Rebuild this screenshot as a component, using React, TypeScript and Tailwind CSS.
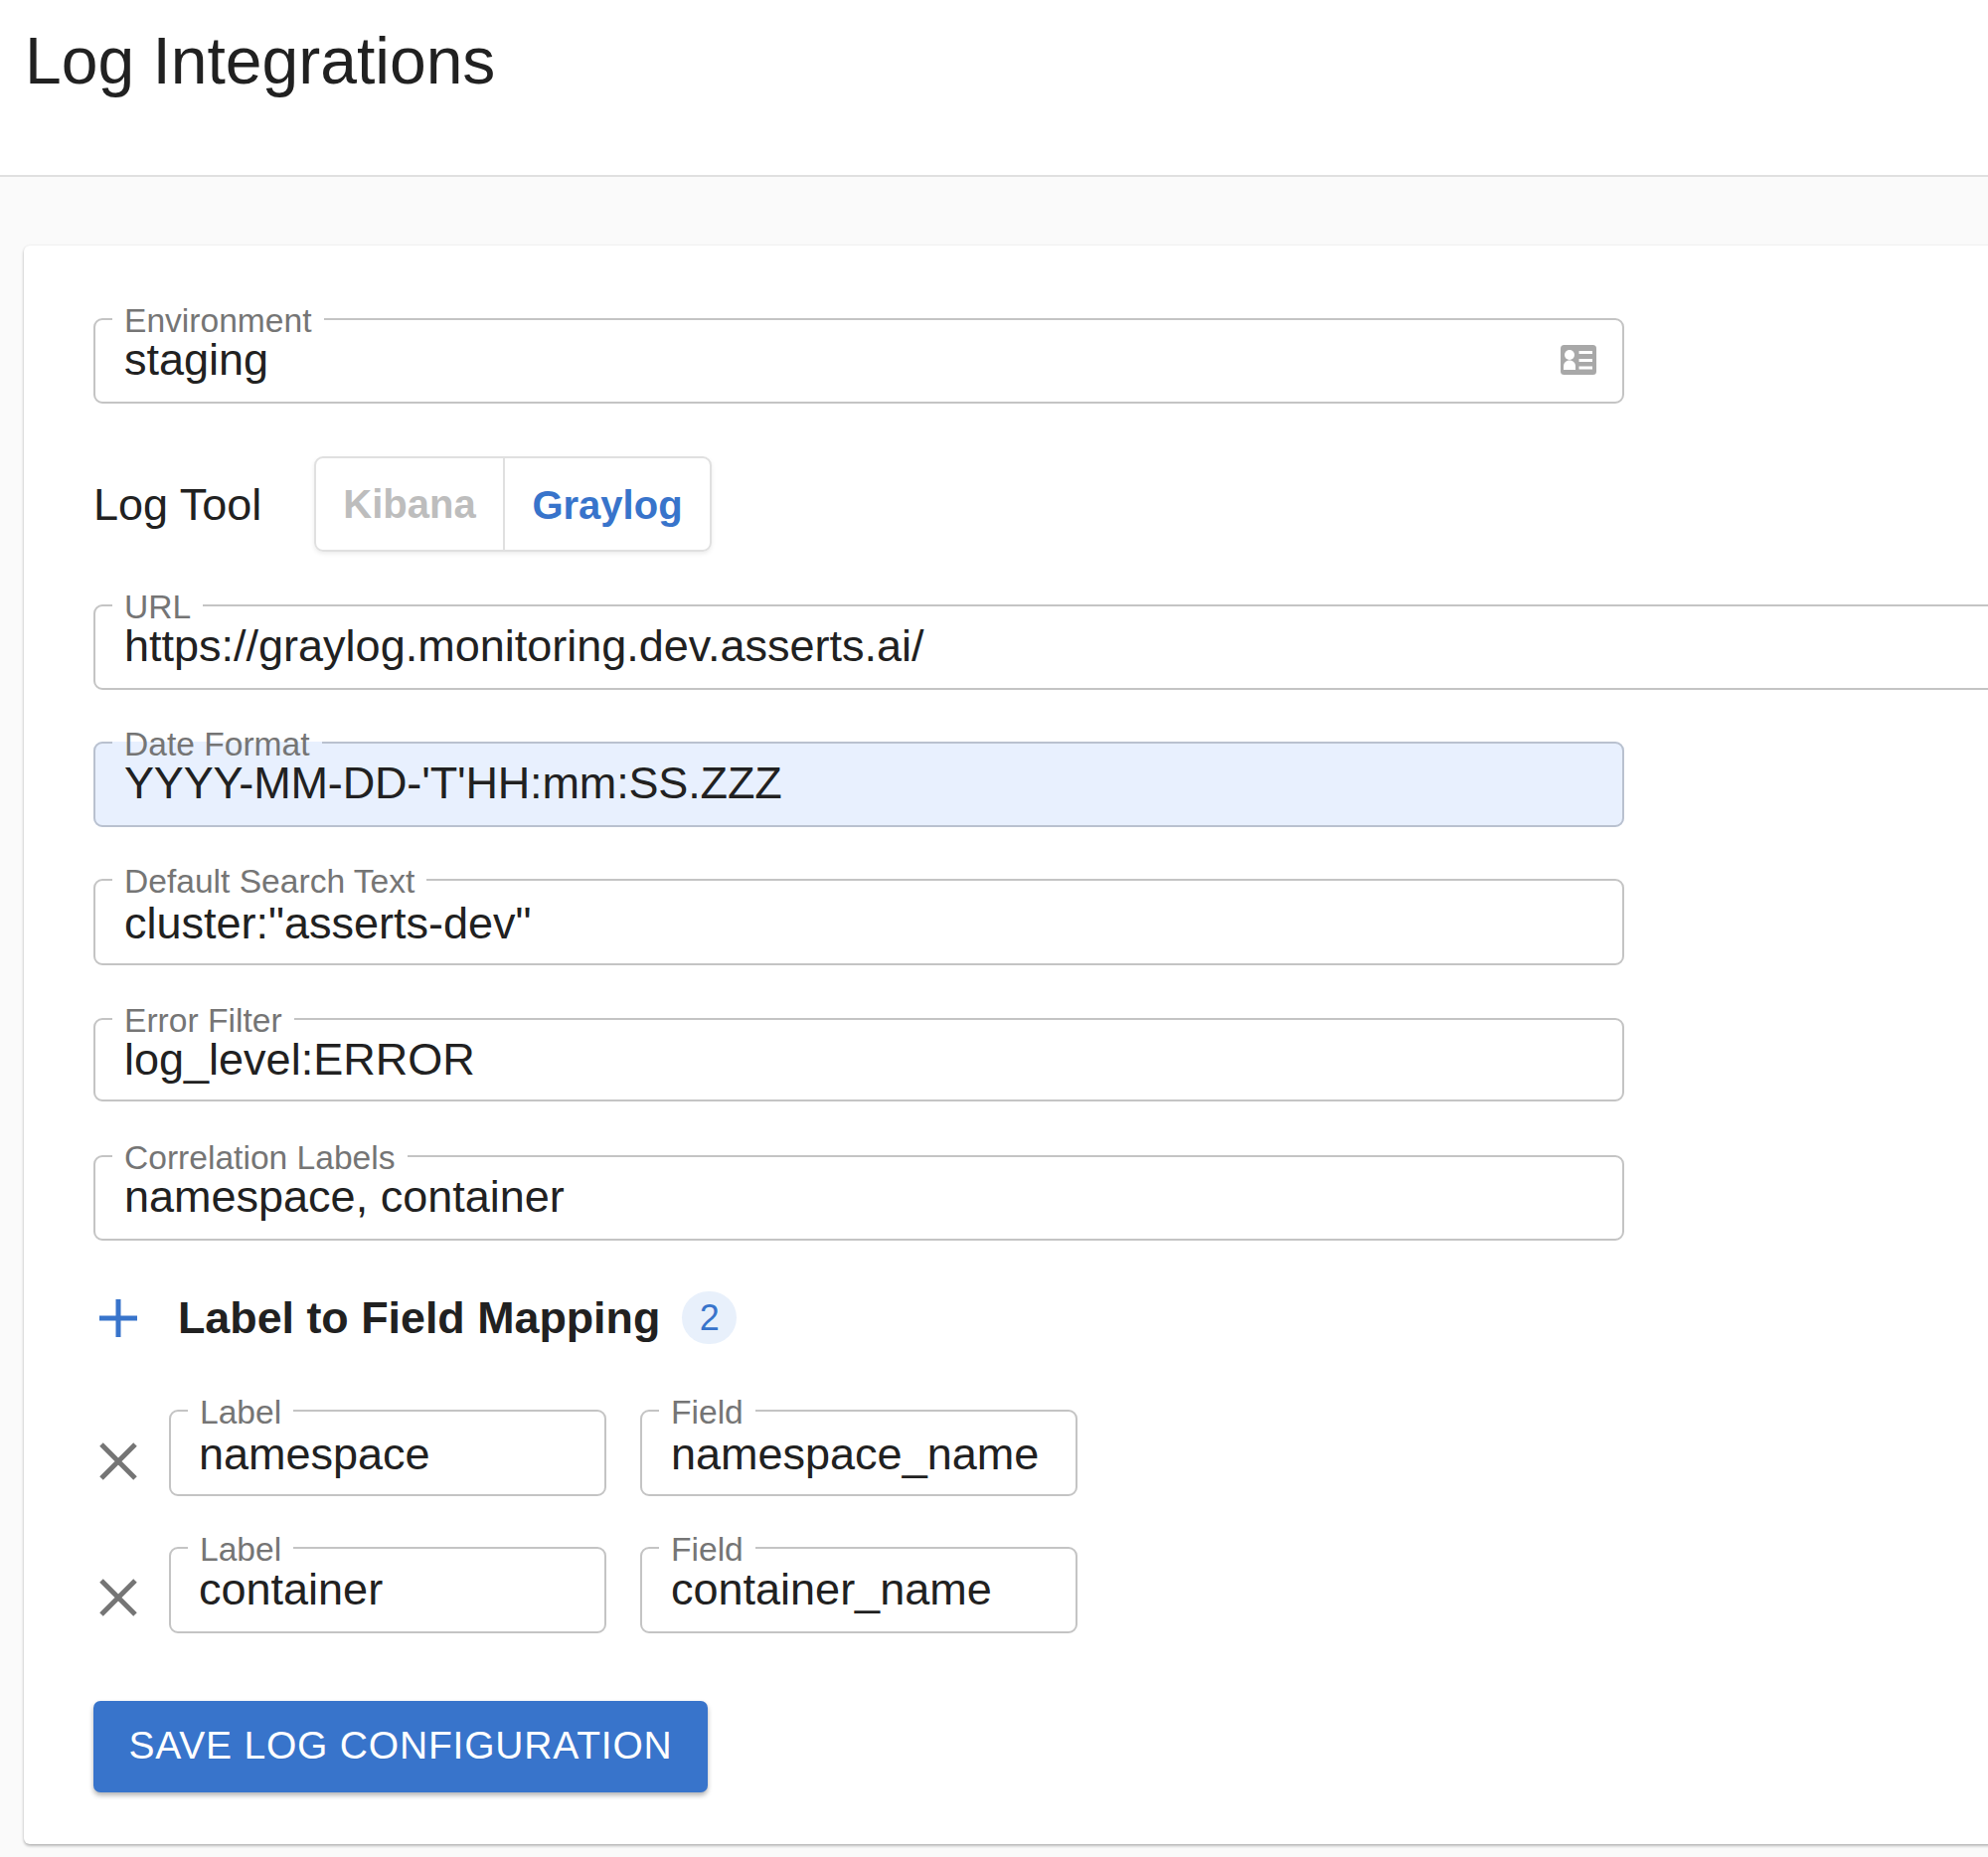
import React from "react";

function Field({
  label,
  value,
  className = "",
  valueClass = "",
  filled = false,
  children,
}: {
  label: string;
  value: string;
  className?: string;
  valueClass?: string;
  filled?: boolean;
  children?: React.ReactNode;
}) {
  return (
    <fieldset
      className={`block border-2 rounded-[9px] ${filled ? "border-[#b9c1cf] bg-[#e8f0fe]" : "border-[#c4c4c4] bg-white"} ${className}`}
    >
      <legend className="ml-[17px] px-[12px] h-[32px] text-[33.6px] leading-[36px] text-[#757575]">{label}</legend>
      <div
        className={`pl-[29px] pr-[26px] h-[50px] flex items-center justify-between text-[45px] leading-[50px] text-[#212121] whitespace-nowrap ${valueClass}`}
      >
        <span>{value}</span>
        {children}
      </div>
    </fieldset>
  );
}

function CardIcon() {
  return (
    <svg width="36" height="30" viewBox="0 0 36 30" className="shrink-0">
      <rect width="36" height="30" rx="3.5" fill="#a8a8a8" />
      <circle cx="9" cy="10" r="5" fill="#fff" />
      <path d="M3 25v-3.5C3 18 5.500 15.500 9 15.500s6 2.500 6 6V25z" fill="#fff" />
      <path d="M18.500 6H32v3H18.500zM18.500 14H32v3H18.500zM18.500 21.500H32v3H18.500z" fill="#fff" />
    </svg>
  );
}

function MappingRow({
  label,
  field,
  className = "",
  valueClass = "",
  iconClass = "",
}: {
  label: string;
  field: string;
  className?: string;
  valueClass?: string;
  iconClass?: string;
}) {
  return (
    <div className={`flex items-end ${className}`}>
      <svg width="40" height="40" viewBox="0 0 40 40" className={`ml-[5px] mr-[31px] ${iconClass}`}>
        <path d="M3 3l34 34M37 3L3 37" stroke="#757575" strokeWidth="5" fill="none" />
      </svg>
      <Field label="Label" value={label} valueClass={`!pl-[28px] ${valueClass}`} className="w-[440px] h-[102px]" />
      <Field label="Field" value={field} valueClass={valueClass} className="w-[440px] h-[102px] ml-[34px]" />
    </div>
  );
}

export default function App() {
  return (
    <div className="w-[2000px] h-[1868px] overflow-hidden bg-[#fafafa] font-['Liberation_Sans',Arial,sans-serif]">
      <header className="h-[178px] bg-white border-b-2 border-[#e0e0e0] pl-[25px] pt-[22px]">
        <h1 className="text-[66px] leading-[78px] font-normal text-[#212121]">Log Integrations</h1>
      </header>
      <main className="pl-[24px] pt-[69px]">
        <div className="w-[2100px] h-[1608px] bg-white rounded-l-[6px] pl-[70px] pt-[58px] shadow-[0_2px_3px_rgba(0,0,0,0.25),0_0_3px_rgba(0,0,0,0.08)]">
          <Field label="Environment" value="staging" className="w-[1540px] h-[101px]">
            <CardIcon />
          </Field>

          <div className="flex items-center mt-[53px] h-[96px]">
            <span className="text-[45px] text-[#212121] w-[222px] pt-[1px]">Log Tool</span>
            <div className="flex h-[96px] w-[400px] border-2 border-[#e0e0e0] rounded-[9px] shadow-[0_2px_4px_rgba(0,0,0,0.08)]">
              <div className="w-[190px] flex items-center justify-center text-[40px] font-bold text-[#bdbdbd] border-r-2 border-[#e0e0e0]">
                Kibana
              </div>
              <div className="flex-1 flex items-center justify-center pt-[2px] text-[40px] font-bold text-[#3874cb]">
                Graylog
              </div>
            </div>
          </div>

          <Field label="URL" value="https://graylog.monitoring.dev.asserts.ai/" className="w-[2100px] h-[101px] mt-[38px]" />
          <Field
            label="Date Format"
            value="YYYY-MM-DD-'T'HH:mm:SS.ZZZ"
            filled
            valueClass="tracking-[-0.15px]"
            className="w-[1540px] h-[101px] mt-[37px]"
          />
          <Field
            label="Default Search Text"
            value={'cluster:"asserts-dev"'}
            valueClass="pt-[5px]"
            className="w-[1540px] h-[102px] mt-[37px]"
          />
          <Field label="Error Filter" value="log_level:ERROR" className="w-[1540px] h-[99px] mt-[38px]" />
          <Field label="Correlation Labels" value="namespace, container" className="w-[1540px] h-[101px] mt-[39px]" />

          <div className="flex items-center mt-[51px] h-[53px]">
            <svg width="38" height="38" viewBox="0 0 38 38" className="ml-[6px] mr-[41px]">
              <path d="M19 0v38M0 19h38" stroke="#3874cb" strokeWidth="5" fill="none" />
            </svg>
            <span className="text-[44.8px] font-bold text-[#212121]">Label to Field Mapping</span>
            <span className="ml-[22px] w-[55px] h-[53px] rounded-full bg-[#e8f0fb] flex items-center justify-center text-[36px] text-[#3874cb]">
              2
            </span>
          </div>

          <MappingRow
            label="namespace"
            field="namespace_name"
            valueClass="pt-[5px]"
            iconClass="mb-[15px]"
            className="mt-[51px]"
          />
          <MappingRow
            label="container"
            field="container_name"
            valueClass="pt-[2px]"
            iconClass="mb-[16px]"
            className="mt-[36px]"
          />

          <button className="block mt-[68px] w-[618px] h-[92px] pb-[2px] bg-[#3874cb] rounded-[7px] text-white text-[39px] tracking-[0.8px] shadow-[0_3px_5px_rgba(0,0,0,0.3)]">
            SAVE LOG CONFIGURATION
          </button>
        </div>
      </main>
    </div>
  );
}
